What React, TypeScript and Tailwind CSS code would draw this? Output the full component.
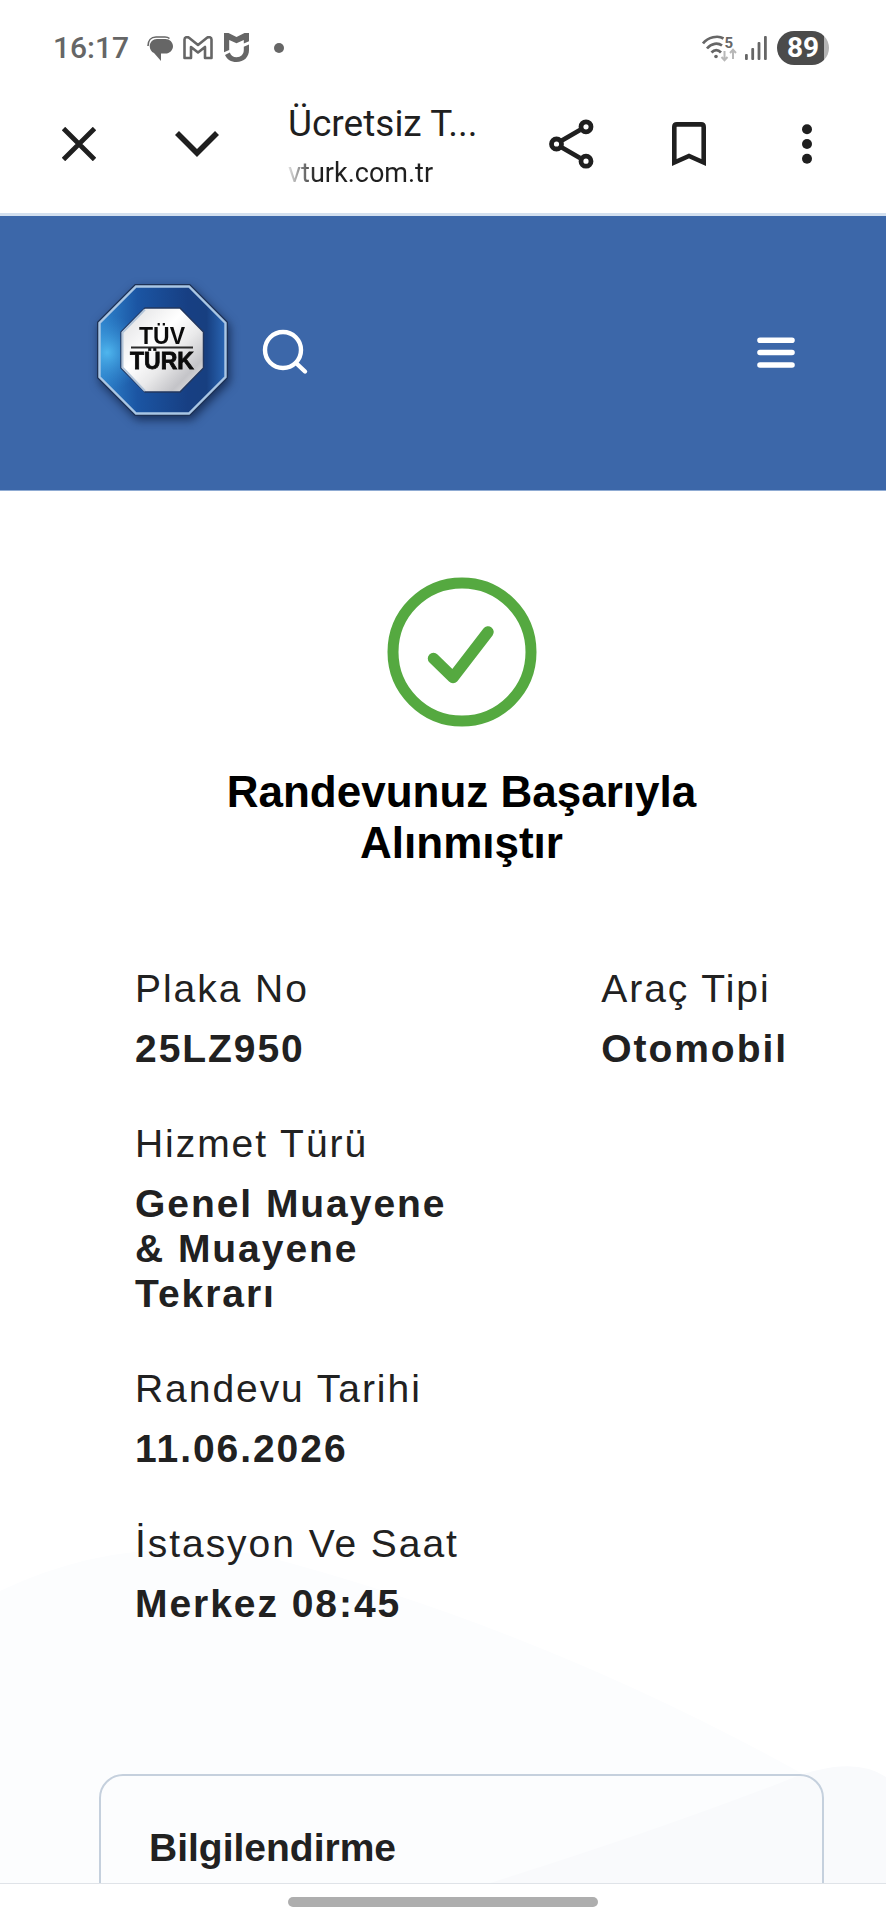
import type { ReactNode } from "react";

interface FieldProps {
  label: string;
  value: string;
}

function IconButton({ label, children }: { label: string; children: ReactNode }) {
  return (
    <button type="button" aria-label={label} className="flex h-full w-[118px] shrink-0 items-center justify-center">
      {children}
    </button>
  );
}

function StatusBar() {
  return (
    <div className="flex h-[75px] shrink-0 items-end justify-between pr-[57px] pl-[53px] pb-2 text-[#666]">
      <div className="flex h-[38px] items-center">
        <span className="font-[Roboto] text-[30px] leading-[38px] font-medium">16:17</span>
        {/* Messages */}
        <svg width="26" height="26" viewBox="0 0 26 26" className="ml-[18px]" fill="currentColor">
          <path d="M10 4h8.500c4 0 7.500 3.200 7.500 7.200s-3.500 7.300-7.500 7.300H14V26l-7-8c-2.600-1-4.300-4-4.300-6.800C2.700 7.200 6 4 10 4z" />
          <path d="M1 11C1 5.500 4 2 9 2h9c2 0 3.500.600 4.500 1.500" fill="none" stroke="currentColor" strokeWidth="1.600" />
        </svg>
        {/* Gmail */}
        <svg width="30" height="24" viewBox="0 0 30 24" className="ml-[10px]" fill="none" stroke="currentColor" strokeWidth="2.600" strokeLinejoin="round">
          <path d="M1.500 3.500v18.500H8V11l7 5.500L22 11v11h6.500V3.500C28.500 1 25.500.500 24 1.800L15 9 6 1.800C4.500.500 1.500 1 1.500 3.500z" />
        </svg>
        {/* Security shield */}
        <svg width="26" height="30" viewBox="0 0 26 30" className="ml-[11px]" fill="currentColor">
          <path d="M0 0h4.500l8 4 8-4H25v8.200l-5.200 2.300V7l-7.300 3.300L5.200 7v10L0 19.200z" />
          <path d="M25 11.500V17c0 7-5 12-12.500 12-5.500 0-9.500-2.500-11.500-7l4.800-2.500c1 3 3.400 4.700 6.700 4.700 4.500 0 7.300-3 7.300-7.200v-3.200z" />
        </svg>
        <span className="ml-6 size-[10px] rounded-full bg-[#666]" />
      </div>
      <div className="flex h-[38px] items-center">
        {/* Wi-Fi with generation and traffic arrows */}
        <svg width="35" height="28" viewBox="0 0 35 28" fill="none" stroke="currentColor" strokeWidth="2.700">
          <path d="M1 9.500C6 3 16 1 21.500 4.500M5 14.500C9.500 9 16 8.500 20 11.500M9.500 18.500c3-3.200 6.500-3.200 9.500 0" />
          <circle cx="14" cy="22.500" r="1.800" fill="currentColor" stroke="none" />
          <text x="22.500" y="14" fontSize="15" fontWeight="700" fontFamily="Roboto" fill="currentColor" stroke="none">5</text>
          <path d="M22.500 17v9M19.500 23l3 3.200 3-3.200M31 25v-9M28 19l3-3.200 3 3.200" stroke="#b8b8b8" strokeWidth="2" />
        </svg>
        <svg width="22" height="24" viewBox="0 0 22 24" className="ml-[8px]" fill="currentColor">
          <rect x="0" y="18" width="2.800" height="6" rx="1" />
          <rect x="6.300" y="12" width="2.800" height="12" rx="1" />
          <rect x="12.600" y="6" width="2.800" height="18" rx="1" />
          <rect x="19" y="0" width="2.800" height="24" rx="1" />
        </svg>
        <div className="ml-[10px] flex h-[34px] w-[52px] items-center justify-center overflow-hidden rounded-full bg-linear-to-r from-[#4b4b4b] from-90% to-[#b5b5b5] to-90%">
          <span className="font-[Roboto] text-[28px] leading-[34px] font-bold text-white">89</span>
        </div>
      </div>
    </div>
  );
}

function BrowserBar() {
  return (
    <div className="flex h-[141px] shrink-0 items-center border-b-[3px] border-[#d3e0ef] px-5 text-[#1f1f1f]">
      <IconButton label="Kapat">
        <svg width="34" height="34" viewBox="0 0 34 34" stroke="currentColor" strokeWidth="4.800">
          <path d="M1.500 1.500l31 31M32.500 1.500l-31 31" />
        </svg>
      </IconButton>
      <IconButton label="Küçült">
        <svg width="44" height="26" viewBox="0 0 44 26" fill="none" stroke="currentColor" strokeWidth="5.600">
          <path d="M2 2l20 20L42 2" />
        </svg>
      </IconButton>
      <div className="min-w-0 flex-1 pt-1 pl-8 font-[Roboto]">
        <p className="truncate text-[37px] leading-[54px]">Ücretsiz T...</p>
        <p className="w-fit text-[27px] leading-[44px] [mask-image:linear-gradient(to_right,transparent_-4px,black_28px)]">
          vturk.com.tr
        </p>
      </div>
      <IconButton label="Paylaş">
        <svg width="46" height="50" viewBox="0 0 46 50" fill="none" stroke="currentColor" strokeWidth="4.800">
          <path d="M13 22l19-11M13 28l19 11" />
          <circle cx="8.500" cy="25" r="5" />
          <circle cx="38" cy="7.800" r="5" />
          <circle cx="38" cy="42.200" r="5" />
        </svg>
      </IconButton>
      <IconButton label="Kaydet">
        <svg width="36" height="46" viewBox="0 0 36 46" fill="none" stroke="currentColor" strokeWidth="4.600">
          <path d="M3.300 41.500V6c0-1.500 1-2.600 2.600-2.600h24.200c1.600 0 2.600 1.100 2.600 2.600v35.500L18 35z" />
        </svg>
      </IconButton>
      <IconButton label="Diğer seçenekler">
        <svg width="10" height="40" viewBox="0 0 10 40" fill="currentColor">
          <circle cx="5" cy="5.300" r="5" />
          <circle cx="5" cy="20" r="5" />
          <circle cx="5" cy="34.700" r="5" />
        </svg>
      </IconButton>
    </div>
  );
}

function Logo() {
  return (
    <svg width="150" height="150" viewBox="0 0 150 150" role="img" aria-label="TÜVTÜRK" className="drop-shadow-[2px_4px_5px_rgba(10,25,60,0.7)]">
      <defs>
        <linearGradient id="ring" x1="0" y1="0" x2="1" y2="0">
          <stop offset="0" stopColor="#2f86cf" />
          <stop offset="0.300" stopColor="#1b55a3" />
          <stop offset="0.700" stopColor="#173f83" />
          <stop offset="0.850" stopColor="#173f80" />
          <stop offset="1" stopColor="#2a66b4" />
        </linearGradient>
        <radialGradient id="shine" cx="0.060" cy="0.520" r="0.300">
          <stop offset="0" stopColor="#4fb6ee" />
          <stop offset="1" stopColor="#2f86cf" stopOpacity="0" />
        </radialGradient>
        <linearGradient id="plate" x1="0" y1="0" x2="1" y2="1">
          <stop offset="0" stopColor="#dcdcde" />
          <stop offset="0.400" stopColor="#ffffff" />
          <stop offset="0.600" stopColor="#e9e9ea" />
          <stop offset="0.800" stopColor="#c4c4c8" />
          <stop offset="1" stopColor="#f4f4f4" />
        </linearGradient>
      </defs>
      <path d="M45 6h55l38 38v56l-38 38H45L7 100V44z" fill="#1d3155" />
      <path d="M46 8.500h53l36.500 36.500v54L99 135.500H46L9.500 99V45z" fill="url(#ring)" />
      <path d="M46 8.500h53l36.500 36.500v54L99 135.500H46L9.500 99V45z" fill="url(#shine)" stroke="#a9c6e4" strokeWidth="2.400" />
      <path d="M55 30h35l23.500 24v36L90 114H55L31 90V54z" fill="url(#plate)" stroke="#22375f" strokeWidth="1.500" />
      <path d="M55 113L32.500 89.500V54.500L55 31.500" fill="none" stroke="#b4c6da" strokeWidth="2" />
      <g fontFamily="Liberation Sans" fontWeight="700" textAnchor="middle" fill="#0b0b0b">
        <text x="72" y="66" fontSize="23">TÜV</text>
        <text x="72" y="91" fontSize="23" stroke="#0b0b0b" strokeWidth="0.800">TÜRK</text>
      </g>
      <path d="M41 69.500h62" stroke="#2b2b2b" strokeWidth="2" />
    </svg>
  );
}

function SiteHeader() {
  return (
    <header className="flex h-[275px] items-center border-b border-[#8fabd3] bg-[#3c67a9] pr-[91px] pl-[90px] text-white">
      <a href="#">
        <Logo />
      </a>
      <button type="button" aria-label="Ara" className="ml-[22px]">
        <svg width="48" height="48" viewBox="0 0 48 48" fill="none" stroke="currentColor" strokeWidth="4.400" strokeLinecap="round">
          <circle cx="21" cy="21" r="18" />
          <path d="M34 34l9 8.500" />
        </svg>
      </button>
      <button type="button" aria-label="Menü" className="ml-auto">
        <svg width="38" height="32" viewBox="0 0 38 32" stroke="currentColor" strokeWidth="5.600" strokeLinecap="round">
          <path d="M3 3.200h32M3 15.500h32M3 28h32" />
        </svg>
      </button>
    </header>
  );
}

function Field({ label, value }: FieldProps) {
  return (
    <div>
      <dt className="whitespace-nowrap">{label}</dt>
      <dd className="mt-[15px] font-bold">{value}</dd>
    </div>
  );
}

export default function App() {
  return (
    <div className="flex h-screen flex-col overflow-hidden bg-white font-['Liberation_Sans',sans-serif] text-[#212121]">
      <StatusBar />
      <BrowserBar />

      <div className="relative min-h-0 flex-1 overflow-hidden">
        {/* Soft hills behind the page */}
        <svg viewBox="0 0 886 350" preserveAspectRatio="none" className="absolute inset-x-0 bottom-0 h-[350px] w-full">
          <path d="M0 58Q120 0 260 22Q560 100 840 262L886 290V350H0z" fill="#fcfdfe" />
          <path d="M490 350Q650 300 780 250Q850 220 886 244V350z" fill="#f9fafc" />
        </svg>

        <div className="relative">
          <SiteHeader />

          <main className="pt-[86px] pr-[62px] pl-[99px]">
            <section className="px-9">
              <svg width="150" height="150" viewBox="0 0 150 150" className="mx-auto" fill="none" stroke="#55a940">
                <circle cx="75" cy="75" r="69" strokeWidth="11" />
                <path d="M46.500 81.500L66 100.500L101 55" strokeWidth="11.500" strokeLinecap="round" strokeLinejoin="round" />
              </svg>
              <h1 className="mt-[39px] text-center text-[44px] leading-[51px] font-bold text-black">
                Randevunuz Başarıyla Alınmıştır
              </h1>

              <dl className="mt-[98px] flex justify-between text-[39px] leading-[45px] tracking-wider">
                <div className="flex w-1/2 flex-col gap-[50px]">
                  <Field label="Plaka No" value="25LZ950" />
                  <Field label="Hizmet Türü" value="Genel Muayene & Muayene Tekrarı" />
                  <Field label="Randevu Tarihi" value="11.06.2026" />
                  <Field label="İstasyon Ve Saat" value="Merkez 08:45" />
                </div>
                <Field label="Araç Tipi" value="Otomobil" />
              </dl>
            </section>

            <section className="mt-[148px] rounded-3xl border-2 border-[#c5d0dd] px-12 pt-[49px] pb-16">
              <h2 className="text-[39px] leading-[45px] font-bold">Bilgilendirme</h2>
            </section>
          </main>
        </div>
      </div>

      {/* Gesture navigation */}
      <div className="flex h-[37px] shrink-0 justify-center border-t border-[#dfe3e8] bg-white pt-[13px]">
        <div className="h-[10px] w-[310px] rounded-full bg-[#aeaeae]" />
      </div>
    </div>
  );
}
